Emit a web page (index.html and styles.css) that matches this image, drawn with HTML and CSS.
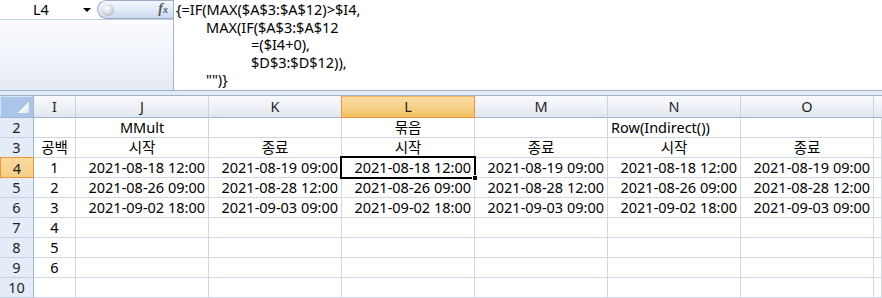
FILE: index.html
```html
<!DOCTYPE html>
<html lang="ko">
<head>
<meta charset="utf-8">
<title>Excel</title>
<link rel="stylesheet" href="styles.css">
</head>
<body>
<div class="app">
  <div class="formula-bar">
    <div class="fb-left">
      <div class="name-row">
        <div class="name-box"><span class="name-text">L4</span><span class="dd-arrow"></span></div>
        <div class="fx-pill"><span class="knob"></span><span class="fx">f<span class="fx-sub">x</span></span></div>
      </div>
      <div class="fb-left-fill"></div>
    </div>
    <div class="formula-text">
      <div class="fl">{=IF(MAX($A$3:$A$12)&gt;$I4,</div>
      <div class="fl in1">MAX(IF($A$3:$A$12</div>
      <div class="fl in2">=($I4+0),</div>
      <div class="fl in2">$D$3:$D$12)),</div>
      <div class="fl in1">"")}</div>
    </div>
  </div>
  <div class="splitter"></div>
  <div class="sheet">
    <div class="corner"><span class="corner-tri"></span></div>
    <div class="ch">I</div>
    <div class="ch">J</div>
    <div class="ch">K</div>
    <div class="ch ch-sel">L</div>
    <div class="ch">M</div>
    <div class="ch">N</div>
    <div class="ch">O</div>
    <div class="ch ch-end"></div>

    <div class="rh">2</div>
    <div class="cell"></div>
    <div class="cell c">MMult</div>
    <div class="cell"></div>
    <div class="cell c">묶음</div>
    <div class="cell"></div>
    <div class="cell l">Row(Indirect())</div>
    <div class="cell"></div>
    <div class="cell"></div>

    <div class="rh">3</div>
    <div class="cell c">공백</div>
    <div class="cell c">시작</div>
    <div class="cell c">종료</div>
    <div class="cell c">시작</div>
    <div class="cell c">종료</div>
    <div class="cell c">시작</div>
    <div class="cell c">종료</div>
    <div class="cell"></div>

    <div class="rh rh-sel">4</div>
    <div class="cell c">1</div>
    <div class="cell r">2021-08-18 12:00</div>
    <div class="cell r">2021-08-19 09:00</div>
    <div class="cell r active">2021-08-18 12:00<span class="sel-box"></span><span class="fill-handle"></span></div>
    <div class="cell r">2021-08-19 09:00</div>
    <div class="cell r">2021-08-18 12:00</div>
    <div class="cell r">2021-08-19 09:00</div>
    <div class="cell"></div>

    <div class="rh">5</div>
    <div class="cell c">2</div>
    <div class="cell r">2021-08-26 09:00</div>
    <div class="cell r">2021-08-28 12:00</div>
    <div class="cell r">2021-08-26 09:00</div>
    <div class="cell r">2021-08-28 12:00</div>
    <div class="cell r">2021-08-26 09:00</div>
    <div class="cell r">2021-08-28 12:00</div>
    <div class="cell"></div>

    <div class="rh">6</div>
    <div class="cell c">3</div>
    <div class="cell r">2021-09-02 18:00</div>
    <div class="cell r">2021-09-03 09:00</div>
    <div class="cell r">2021-09-02 18:00</div>
    <div class="cell r">2021-09-03 09:00</div>
    <div class="cell r">2021-09-02 18:00</div>
    <div class="cell r">2021-09-03 09:00</div>
    <div class="cell"></div>

    <div class="rh">7</div>
    <div class="cell c">4</div>
    <div class="cell"></div><div class="cell"></div><div class="cell"></div><div class="cell"></div><div class="cell"></div><div class="cell"></div><div class="cell"></div>

    <div class="rh">8</div>
    <div class="cell c">5</div>
    <div class="cell"></div><div class="cell"></div><div class="cell"></div><div class="cell"></div><div class="cell"></div><div class="cell"></div><div class="cell"></div>

    <div class="rh">9</div>
    <div class="cell c">6</div>
    <div class="cell"></div><div class="cell"></div><div class="cell"></div><div class="cell"></div><div class="cell"></div><div class="cell"></div><div class="cell"></div>

    <div class="rh">10</div>
    <div class="cell"></div>
    <div class="cell"></div><div class="cell"></div><div class="cell"></div><div class="cell"></div><div class="cell"></div><div class="cell"></div><div class="cell"></div>
  </div>
</div>
</body>
</html>
```
FILE: styles.css
```css
* { box-sizing: border-box; }
html, body {
  margin: 0;
  padding: 0;
  background: #ffffff;
}
body {
  width: 882px;
  height: 298px;
  overflow: hidden;
  font-family: "Noto Sans", "Noto Sans CJK KR", sans-serif;
  font-size: 14.5px;
  color: #000;
}
.app {
  display: flex;
  flex-direction: column;
  width: 882px;
  height: 298px;
}

/* ---------- formula bar ---------- */
.formula-bar {
  display: flex;
  height: 91px;
  border-bottom: 1px solid #9fb2ca;
}
.fb-left {
  width: 174px;
  display: flex;
  flex-direction: column;
  border-right: 1px solid #a3b5cc;
}
.name-row {
  display: flex;
  height: 20px;
  border-bottom: 1px solid #c4ccd8;
}
.name-box {
  width: 97px;
  background: #fff;
  display: flex;
  align-items: center;
  position: relative;
}
.name-text {
  margin-left: 33px;
  line-height: 19px;
}
.dd-arrow {
  margin-left: auto;
  margin-right: 6px;
  width: 0;
  height: 0;
  border-left: 4px solid transparent;
  border-right: 4px solid transparent;
  border-top: 4px solid #000;
}
.fx-pill {
  flex: 1;
  display: flex;
  align-items: center;
  border: 1px solid #9aaec8;
  border-right: none;
  border-radius: 10px 0 0 10px;
  background: linear-gradient(to bottom, #f4f8fd 0%, #e2ebf7 45%, #c9daf0 100%);
}
.knob {
  width: 12px;
  height: 12px;
  margin-left: 4px;
  border-radius: 50%;
  background: radial-gradient(circle at 40% 35%, #ffffff 0%, #d9dde3 45%, #9da4ae 100%);
}
.fx {
  margin-left: auto;
  margin-right: 5px;
  font-family: "Liberation Serif", serif;
  font-style: italic;
  font-weight: bold;
  font-size: 14px;
  color: #5a5a5a;
  line-height: 14px;
}
.fx-sub {
  font-size: 10px;
}
.fb-left-fill {
  flex: 1;
  background: linear-gradient(to bottom, #fbfcfe 0%, #eef2f8 60%, #e4eaf3 100%);
}
.formula-text {
  flex: 1;
  background: #fff;
  padding: 1px 0 0 2px;
}
.fl {
  height: 17.6px;
  line-height: 17.6px;
  white-space: nowrap;
}
.in1 { padding-left: 30px; }
.in2 { padding-left: 75px; }

/* ---------- splitter ---------- */
.splitter {
  height: 5px;
  background: #e4eaf3;
  border-bottom: 1px solid #9db2cc;
}

/* ---------- sheet ---------- */
.sheet {
  display: grid;
  grid-template-columns: 34px 42px repeat(6, 133px) 1fr;
  grid-template-rows: 22px repeat(9, 20px);
}
.corner {
  position: relative;
  background: #abc5ea;
  border-right: 1px solid #9eb6ce;
  border-bottom: 1px solid #9eb6ce;
  box-shadow: inset 1px 1px 0 #d6e2f3;
}
.corner-tri {
  position: absolute;
  right: 4px;
  bottom: 4px;
  width: 12px;
  height: 12px;
  background: linear-gradient(135deg, transparent 50%, #f7f9fc 50%, #dfe5ee 100%);
}
.ch {
  background: linear-gradient(to bottom, #f9fafc 0%, #eef1f6 50%, #e2e7ef 100%);
  border-right: 1px solid #c7d3e2;
  border-bottom: 1px solid #9eb6ce;
  text-align: center;
  line-height: 21px;
  color: #1f1f1f;
}
.ch-sel {
  background: linear-gradient(to bottom, #f9dca4 0%, #f7d18a 50%, #f1c15f 100%);
  border: 1px solid #f2953a;
  border-top-color: #f5b15c;
  margin-left: -1px;
  line-height: 19px;
}
.ch-end { border-right: none; }
.rh {
  background: #e4ecf7;
  border-right: 1px solid #9eb6ce;
  border-bottom: 1px solid #c5d2e3;
  text-align: center;
  line-height: 19px;
  color: #1f1f1f;
}
.rh-sel {
  background: linear-gradient(to bottom, #f9d9a0 0%, #f6cf86 100%);
  border: 1px solid #f29536;
  border-bottom-color: #f29536;
  margin-top: -1px;
  line-height: 20px;
}
.cell {
  border-right: 1px solid #d0d7e5;
  border-bottom: 1px solid #d0d7e5;
  line-height: 19px;
  white-space: nowrap;
}
.c { text-align: center; }
.r { text-align: right; padding-right: 3px; }
.l { text-align: left; padding-left: 3px; }

.active { position: relative; }
.sel-box {
  position: absolute;
  left: -2px;
  top: -2px;
  right: -2px;
  bottom: -2px;
  border: 2px solid #000;
  pointer-events: none;
}
.fill-handle {
  position: absolute;
  right: -4px;
  bottom: -4px;
  width: 6px;
  height: 6px;
  background: #000;
  border: 1px solid #fff;
}
```
